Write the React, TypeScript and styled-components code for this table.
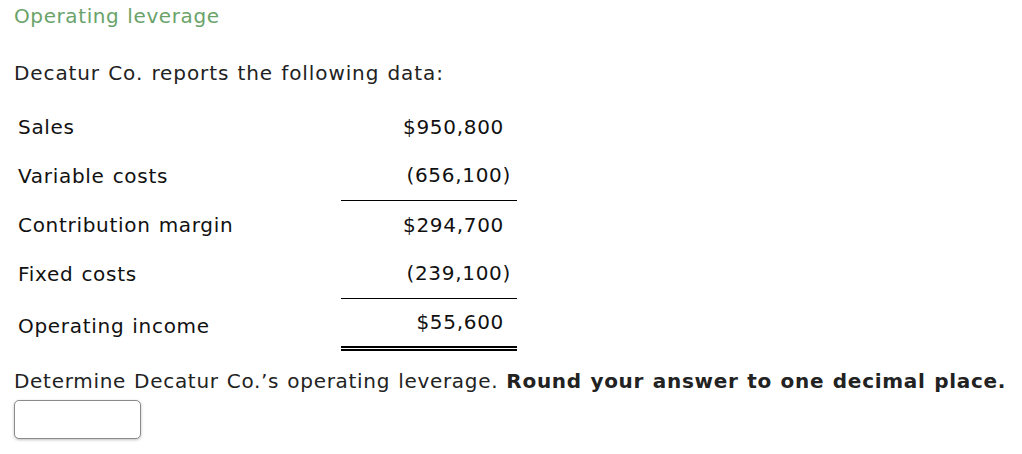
import React from 'react';
import styled, {createGlobalStyle} from 'styled-components';

const GlobalStyle = createGlobalStyle`
  body {
    margin: 0;
    background: #fff;
    font-family: 'DejaVu Sans', Verdana, sans-serif;
    color: #222;
  }
`;

const Page = styled.div`
  padding: 5px 14px;
  font-size: 20px;
  line-height: 22px;
  letter-spacing: 0.7px;
  word-spacing: 1px;
`;

const Title = styled.div`
  color: #6aa36a;
  letter-spacing: 0.6px;
`;

const Intro = styled.p`
  margin: 35px 0 18px;
  letter-spacing: 0.9px;
`;

const DataTable = styled.table`
  border-collapse: collapse;
`;

const Row = styled.tr<{tall?: boolean}>`
  height: ${p => (p.tall ? '50px' : '49px')};
`;

const Label = styled.td<{low?: boolean}>`
  width: 323px;
  padding: ${p => (p.low ? '6px 0 0 4px' : '0 0 0 4px')};
  vertical-align: middle;
  color: #111;
`;

type Rule = 'none' | 'single' | 'double';

const Value = styled.td<{rule: Rule; paren: boolean}>`
  box-sizing: border-box;
  width: 176px;
  padding: 0 ${p => (p.paren ? '6px' : '13px')} 0 0;
  text-align: right;
  vertical-align: middle;
  color: #111;
  white-space: nowrap;
  border-bottom: ${p =>
    p.rule === 'single'
      ? '1.5px solid #000'
      : p.rule === 'double'
      ? '5px double #000'
      : 'none'};
`;

const Question = styled.p`
  margin: 19px 0 8px;
`;

const AnswerInput = styled.input`
  display: block;
  box-sizing: border-box;
  width: 127px;
  height: 39px;
  border: 1px solid #8a8a8a;
  border-radius: 5px;
  box-shadow: 0 1px 3px rgba(0, 0, 0, 0.25);
  font-size: 16px;
  padding: 0 6px;
  outline: none;
`;

interface Line {
  label: string;
  value: string;
  rule: Rule;
}

const lines: Line[] = [
  {label: 'Sales', value: '$950,800', rule: 'none'},
  {label: 'Variable costs', value: '(656,100)', rule: 'single'},
  {label: 'Contribution margin', value: '$294,700', rule: 'none'},
  {label: 'Fixed costs', value: '(239,100)', rule: 'single'},
  {label: 'Operating income', value: '$55,600', rule: 'double'},
];

export default function App() {
  return (
    <>
      <GlobalStyle />
      <Page>
        <Title>Operating leverage</Title>
        <Intro>Decatur Co. reports the following data:</Intro>
        <DataTable>
          <tbody>
            {lines.map(l => (
              <Row key={l.label} tall={l.rule === 'double'}>
                <Label low={l.rule === 'double'}>{l.label}</Label>
                <Value rule={l.rule} paren={l.value.startsWith('(')}>
                  {l.value}
                </Value>
              </Row>
            ))}
          </tbody>
        </DataTable>
        <Question>
          Determine Decatur Co.’s operating leverage.{' '}
          <b>Round your answer to one decimal place.</b>
        </Question>
        <AnswerInput type='text' aria-label='Operating leverage' />
      </Page>
    </>
  );
}
